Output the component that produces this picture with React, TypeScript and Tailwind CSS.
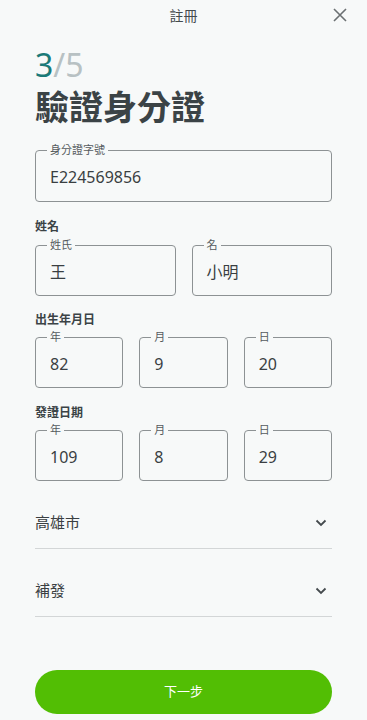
import React from 'react';

const font = { fontFamily: '"Noto Sans", "Noto Sans CJK TC", sans-serif' };

// outlined input: fieldset + legend keeps the label sitting on the border
function Outlined({ label, value, className = '' }: { label: string; value: string; className?: string }) {
  return (
    <fieldset className={`border border-[#8d9294] rounded-[4px] px-[14px] h-[58px] ${className}`}>
      <legend className="ml-[-3px] px-[3px] text-[11px] leading-[14px] text-[#555b5e]">{label}</legend>
      <div className="text-[16px] leading-[22px] text-[#3a3f42] mt-[9px]">{value}</div>
    </fieldset>
  );
}

function SectionLabel({ children, className = '' }: { children: React.ReactNode; className?: string }) {
  return <div className={`text-[12px] leading-[16px] font-bold text-[#3b4346] ${className}`}>{children}</div>;
}

function SelectRow({ value, className = '' }: { value: string; className?: string }) {
  return (
    <div className={`h-[52px] flex items-center justify-between border-b border-[#d3d6d7] ${className}`}>
      <span className="text-[15px] text-[#3a3f42]">{value}</span>
      <svg width="12" height="8" viewBox="0 0 12 8" className="mr-[5px]">
        <path d="M1.5 1.5 L6 6 L10.5 1.5" fill="none" stroke="#444a4d" strokeWidth="1.8" />
      </svg>
    </div>
  );
}

export default function App() {
  return (
    <main className="min-h-screen w-full bg-[#f7f9f9]" style={font}>
      {/* Header */}
      <div className="h-[30px] flex items-center justify-center relative">
        <span className="text-[14px] text-[#444a4d]">註冊</span>
        <svg width="14" height="14" viewBox="0 0 14 14" className="absolute right-[20px] top-[8px]">
          <path d="M1 1 L13 13 M13 1 L1 13" stroke="#6b7072" strokeWidth="1.6" />
        </svg>
      </div>

      <div className="px-[35px] pb-[6px]">
        <div className="mt-[17px] text-[32px] leading-[36px]">
          <span className="text-[#1b7a78]">3</span>
          <span className="text-[#b8c1c3]">/5</span>
        </div>
        <h1 className="mt-[4px] text-[34px] leading-[40px] font-bold text-[#3b4346]">驗證身分證</h1>

        <Outlined label="身分證字號" value="E224569856" className="mt-[16px] h-[59px]" />

        <SectionLabel className="mt-[17px]">姓名</SectionLabel>
        <div className="mt-[3px] grid grid-cols-2 gap-[16px]">
          <Outlined label="姓氏" value="王" />
          <Outlined label="名" value="小明" />
        </div>

        <SectionLabel className="mt-[16px]">出生年月日</SectionLabel>
        <div className="mt-[2px] grid grid-cols-3 gap-[16px]">
          <Outlined label="年" value="82" />
          <Outlined label="月" value="9" />
          <Outlined label="日" value="20" />
        </div>

        <SectionLabel className="mt-[17px]">發證日期</SectionLabel>
        <div className="mt-[2px] grid grid-cols-3 gap-[16px]">
          <Outlined label="年" value="109" />
          <Outlined label="月" value="8" />
          <Outlined label="日" value="29" />
        </div>

        <SelectRow value="高雄市" className="mt-[16px]" />
        <SelectRow value="補發" className="mt-[16px]" />

        <button className="mt-[53px] w-full h-[44px] rounded-full bg-[#52be04] text-white text-[13px]">
          下一步
        </button>
      </div>
    </main>
  );
}
